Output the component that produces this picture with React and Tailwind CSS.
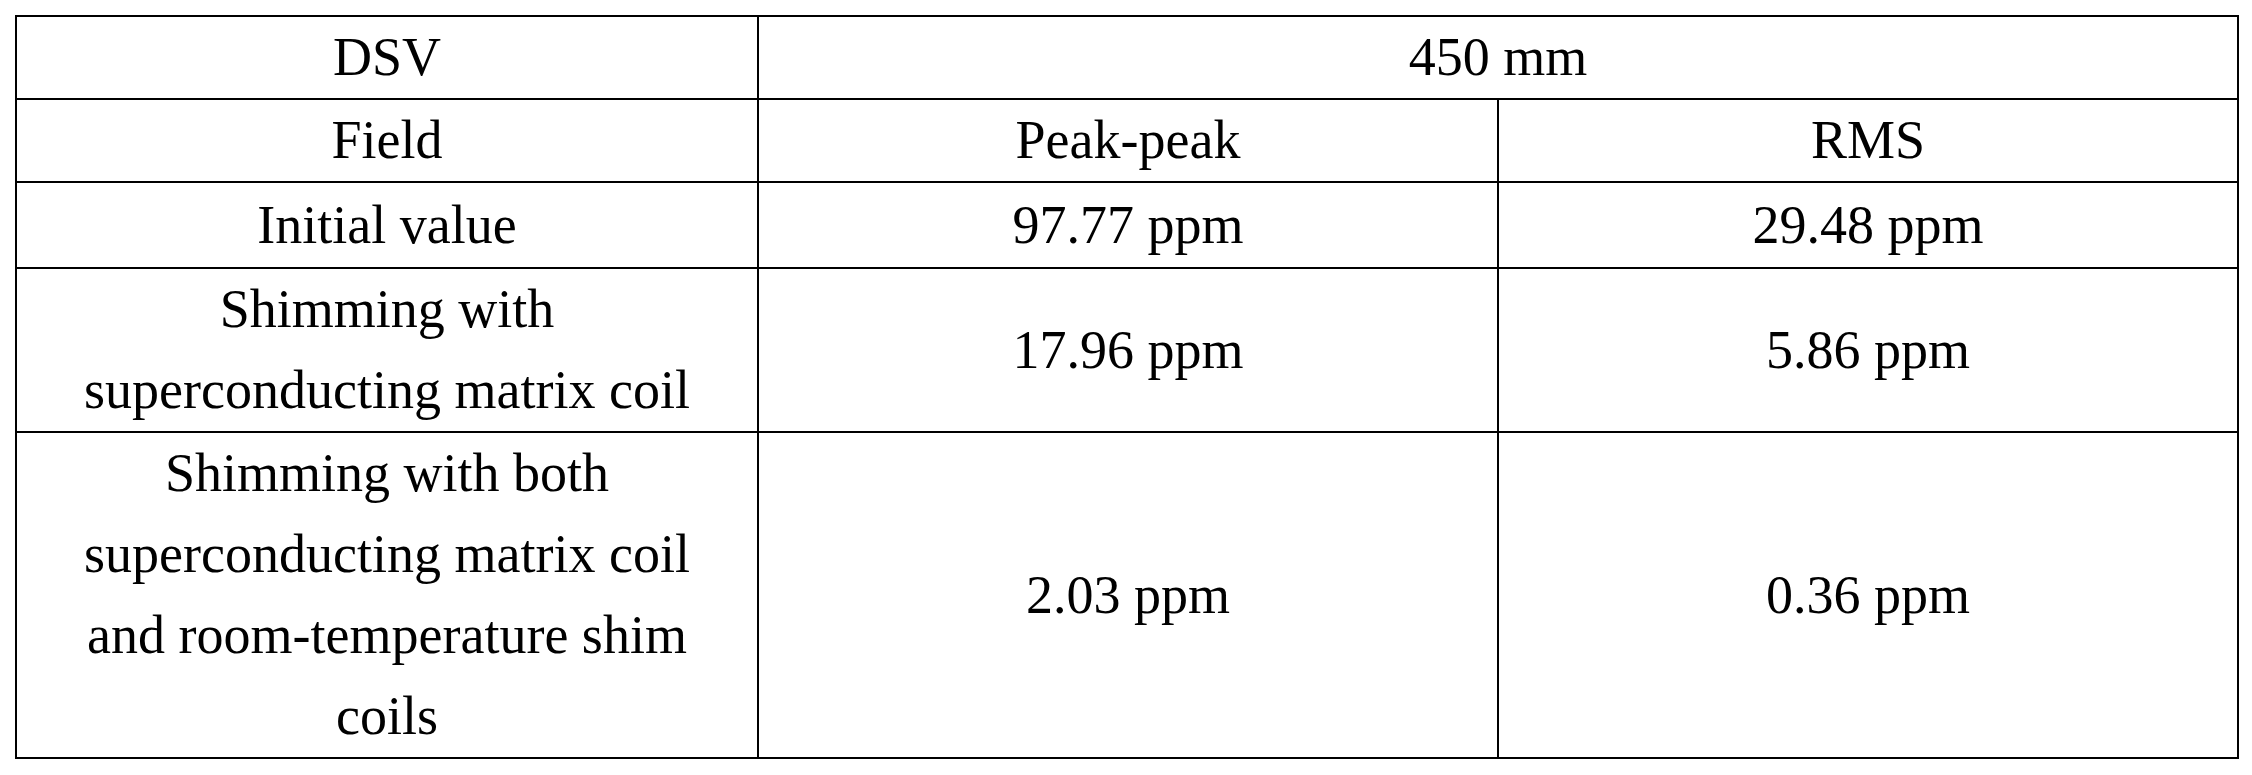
import React from 'react';

const rows = [
  { label: ['Initial value'], peak: '97.77 ppm', rms: '29.48 ppm', tall: true },
  { label: ['Shimming with', 'superconducting matrix coil'], peak: '17.96 ppm', rms: '5.86 ppm' },
  {
    label: ['Shimming with both', 'superconducting matrix coil', 'and room-temperature shim', 'coils'],
    peak: '2.03 ppm',
    rms: '0.36 ppm',
  },
];

const cell = 'border-2 border-black p-0 text-center align-middle font-normal';

const App = () => {
  return (
    <div className="w-[2252px] h-[775px] bg-white pt-[15px] pl-[15px] text-black text-[54px] leading-[81px] font-['Liberation_Serif','Times_New_Roman',serif]">
      <table className="table-fixed border-collapse w-[2222px]">
        <colgroup>
          <col className="w-[742px]" />
          <col className="w-[740px]" />
          <col className="w-[740px]" />
        </colgroup>
        <tbody>
          <tr>
            <td className={cell}>DSV</td>
            <td className={cell} colSpan={2}>450 mm</td>
          </tr>
          <tr>
            <td className={cell}>Field</td>
            <td className={cell}>Peak-peak</td>
            <td className={cell}>RMS</td>
          </tr>
          {rows.map((row, i) => (
            <tr key={i} className={row.tall ? 'leading-[84px]' : ''}>
              <td className={cell}>
                {row.label.map((line, j) => (
                  <div key={j}>{line}</div>
                ))}
              </td>
              <td className={cell}>{row.peak}</td>
              <td className={cell}>{row.rms}</td>
            </tr>
          ))}
        </tbody>
      </table>
    </div>
  );
};

export default App;
